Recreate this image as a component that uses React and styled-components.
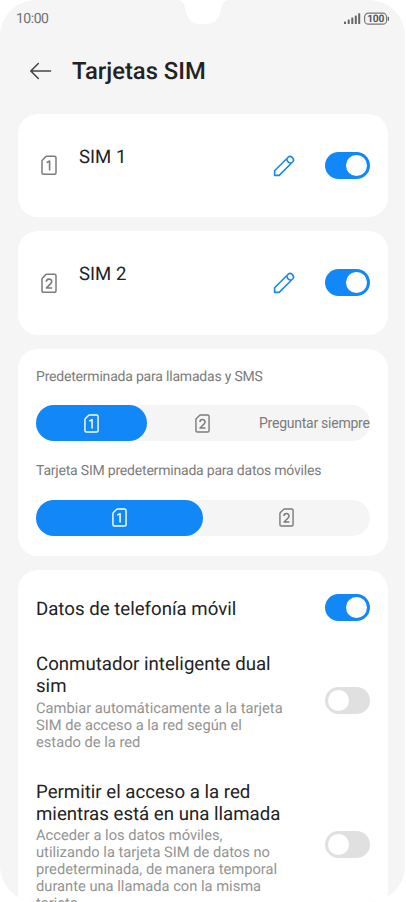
import React, { useState } from 'react'
import styled, { createGlobalStyle } from 'styled-components'

const GlobalStyle = createGlobalStyle`
  * { box-sizing: border-box; }
  body {
    margin: 0;
    background: #fff;
    overflow: hidden;
    font-family: Roboto, "Liberation Sans", sans-serif;
    text-rendering: geometricPrecision;
  }
`

const Screen = styled.div`
  position: relative;
  display: flex;
  flex-direction: column;
  width: 405px;
  height: 902px;
  overflow: hidden;
  border-radius: 36px;
  background: #f5f5f5;
`

const Notch = styled.svg`
  position: absolute;
  top: 0;
  left: 176px;
`

const StatusBar = styled.div`
  display: flex;
  flex: none;
  justify-content: space-between;
  align-items: center;
  height: 38px;
  padding: 0 15px 0 16px;
`

const Clock = styled.span`
  color: #717171;
  font-size: 14px;
  line-height: 16px;
  letter-spacing: -0.5px;
`

const Header = styled.header`
  display: flex;
  flex: none;
  align-items: center;
  gap: 20px;
  height: 76px;
  padding: 0 0 10px 29px;
`

const Title = styled.h1`
  margin: 0;
  color: #222;
  font-size: 23.8px;
  font-weight: 500;
  line-height: 28px;
`

const Cards = styled.main`
  display: flex;
  flex-direction: column;
  gap: 14px;
  padding: 0 17px 0 18px;
`

const Card = styled.section`
  flex: none;
  border-radius: 20px;
  background: #fff;
`

const SimCard = styled(Card)`
  display: flex;
  align-items: center;
  height: 103.3px;
  padding: 0 18px 0 22.5px;
`

const SimName = styled.span`
  flex: 1;
  margin: -17px 0 0 22.5px;
  color: #222;
  font-size: 18.6px;
  line-height: 22px;
`

const Pencil = styled.svg`
  margin-right: 30px;
`

const DefaultsCard = styled(Card)`
  height: 207px;
  padding: 17px 18px 0;
`

const Label = styled.p`
  margin: 0;
  height: 39.5px;
  color: #7b7b7b;
  font-size: 14px;
  line-height: 22px;
  letter-spacing: -0.2px;
  white-space: nowrap;
`

const Segments = styled.div`
  display: flex;
  height: 36px;
  margin-bottom: 19px;
  border-radius: 18px;
  background: #f5f5f5;
`

const Segment = styled.button`
  display: flex;
  flex: 1 1 0;
  min-width: 0;
  justify-content: center;
  align-items: center;
  padding: 0;
  border: 0;
  border-radius: 18px;
  background: ${props => props.$selected ? '#1287f8' : 'transparent'};
  color: ${props => props.$selected ? '#fff' : '#7b7b7b'};
  font-family: inherit;
  font-size: 14px;
  letter-spacing: -0.25px;
  white-space: nowrap;
`

const OptionsCard = styled(Card)`
  padding: 24px 18px 0;
`

const Option = styled.div`
  display: flex;
  justify-content: space-between;
  align-items: center;
  margin-bottom: ${props => props.$gap}px;
`

const OptionBody = styled.div`
  padding-top: ${props => props.$top || 0}px;
`

const OptionTitle = styled.h2`
  margin: 0;
  color: #222;
  font-size: 18.65px;
  font-weight: 400;
  line-height: 22px;
  white-space: pre;
`

const OptionText = styled.p`
  margin: ${props => props.$top || 2}px 0 0;
  color: #939393;
  font-size: 14.7px;
  line-height: 17px;
  white-space: pre;
`

const Track = styled.button`
  display: flex;
  flex: none;
  align-items: center;
  justify-content: ${props => props.$on ? 'flex-end' : 'flex-start'};
  width: 45px;
  height: 27px;
  margin-bottom: ${props => props.$lift || 0}px;
  padding: 3px;
  border: 0;
  border-radius: 14px;
  background: ${props => props.$on ? '#1287f8' : '#e0e0e0'};
`

const Knob = styled.span`
  width: 21px;
  height: 21px;
  border-radius: 50%;
  background: #fff;
`

const Switch = ({ initial, lift }) => {
  const [on, setOn] = useState(initial)
  return (
    <Track $on={on} $lift={lift} onClick={() => setOn(!on)}>
      <Knob />
    </Track>
  )
}

const digits = {
  1: 'M5.6 7.4 L8.6 5.8 V15.2',
  2: 'M5.3 8.5 C5.3 5 10.7 5 10.7 8.3 C10.7 10.5 7.2 12.6 5.4 14.7 H11.1'
}

const SimIcon = ({ n, width = 16, height = 20.5, color = 'currentColor' }) => (
  <svg width={width} height={height} viewBox="0 0 16 20" fill="none" stroke={color} strokeWidth="1.5" strokeLinejoin="round">
    <path d="M5.8 .9 H13.5 Q15 .9 15 2.4 V17.6 Q15 19.1 13.5 19.1 H2.5 Q1 19.1 1 17.6 V5.8 Q1 5.2 1.5 4.7 L4.8 1.4 Q5.2 .9 5.8 .9 Z" />
    <path d={digits[n]} strokeWidth="1.6" />
  </svg>
)

const SimRow = ({ n }) => (
  <SimCard>
    <SimIcon n={n} color="#7b7b7b" />
    <SimName>SIM {n}</SimName>
    <Pencil width="22" height="22" viewBox="0 0 22 22" fill="none" stroke="#1d87e4" strokeWidth="1.6" strokeLinejoin="round">
      <path d="M1.6 20.4 V15.8 L15.2 2.2 Q17.2 .5 19.4 2.6 Q21.5 4.8 19.8 6.8 L6.2 20.4 Z" />
      <path d="M13.8 3.8 Q14.2 7.8 18.2 8.2" />
    </Pencil>
    <Switch initial />
  </SimCard>
)

const StatusIcons = () => (
  <svg width="47" height="14" viewBox="0 0 47 14">
    <g fill="#666">
      <rect x="1" y="9.5" width="2" height="2.5" rx=".5" />
      <rect x="4.7" y="7.5" width="2" height="4.5" rx=".5" />
      <rect x="8.3" y="5.5" width="2" height="6.5" rx=".5" />
      <rect x="11.8" y="3.5" width="2" height="8.5" rx=".5" />
      <rect x="15.2" y="1.3" width="2" height="10.7" rx=".5" />
      <rect x="44.7" y="4.8" width="1.3" height="4" rx=".6" />
    </g>
    <rect x="21.6" y="1.2" width="22" height="11" rx="3.8" fill="none" stroke="#777" strokeWidth="1.2" />
    <text x="32.6" y="10.4" textAnchor="middle" fill="#555" fontFamily="Roboto, sans-serif" fontSize="10.3" fontWeight="700" letterSpacing="-.3">100</text>
  </svg>
)

const App = () => {
  const [callSim, setCallSim] = useState(0)
  const [dataSim, setDataSim] = useState(0)

  return (
    <>
      <GlobalStyle />
      <Screen>
        <Notch width="54" height="25" viewBox="0 0 54 25">
          <path d="M1 0 C6 .5 7.7 3 9 8 C11 17 14 24 25 24 H29 C39 24 43 19 45 10 C46 4 48 .5 53 0 Z" fill="#fff" />
        </Notch>
        <StatusBar>
          <Clock>10:00</Clock>
          <StatusIcons />
        </StatusBar>
        <Header>
          <svg width="23" height="18" viewBox="0 0 23 18" fill="none" stroke="#444" strokeWidth="1.6" strokeLinecap="round" strokeLinejoin="round">
            <path d="M9.3 1.5 L1.8 9 L9.3 16.5 M1.8 9 H21.5" />
          </svg>
          <Title>Tarjetas SIM</Title>
        </Header>
        <Cards>
          <SimRow n={1} />
          <SimRow n={2} />
          <DefaultsCard>
            <Label>Predeterminada para llamadas y SMS</Label>
            <Segments>
              {[0, 1, 2].map(i => (
                <Segment key={i} $selected={callSim === i} onClick={() => setCallSim(i)}>
                  {i < 2 ? <SimIcon n={i + 1} width={15} height={19} /> : 'Preguntar siempre'}
                </Segment>
              ))}
            </Segments>
            <Label>Tarjeta SIM predeterminada para datos móviles</Label>
            <Segments>
              {[0, 1].map(i => (
                <Segment key={i} $selected={dataSim === i} onClick={() => setDataSim(i)}>
                  <SimIcon n={i + 1} width={15} height={19} />
                </Segment>
              ))}
            </Segments>
          </DefaultsCard>
          <OptionsCard>
            <Option $gap={32}>
              <OptionBody $top={3}>
                <OptionTitle>Datos de telefonía móvil</OptionTitle>
              </OptionBody>
              <Switch initial />
            </Option>
            <Option $gap={30}>
              <OptionBody>
                <OptionTitle>{'Conmutador inteligente dual\nsim'}</OptionTitle>
                <OptionText $top={3}>{'Cambiar automáticamente a la tarjeta\nSIM de acceso a la red según el\nestado de la red'}</OptionText>
              </OptionBody>
              <Switch initial={false} lift={3} />
            </Option>
            <Option $gap={20}>
              <OptionBody>
                <OptionTitle>{'Permitir el acceso a la red\nmientras está en una llamada'}</OptionTitle>
                <OptionText>{'Acceder a los datos móviles,\nutilizando la tarjeta SIM de datos no\npredeterminada, de manera temporal\ndurante una llamada con la misma\ntarjeta'}</OptionText>
              </OptionBody>
              <Switch initial={false} lift={3} />
            </Option>
          </OptionsCard>
        </Cards>
      </Screen>
    </>
  )
}

export default App
